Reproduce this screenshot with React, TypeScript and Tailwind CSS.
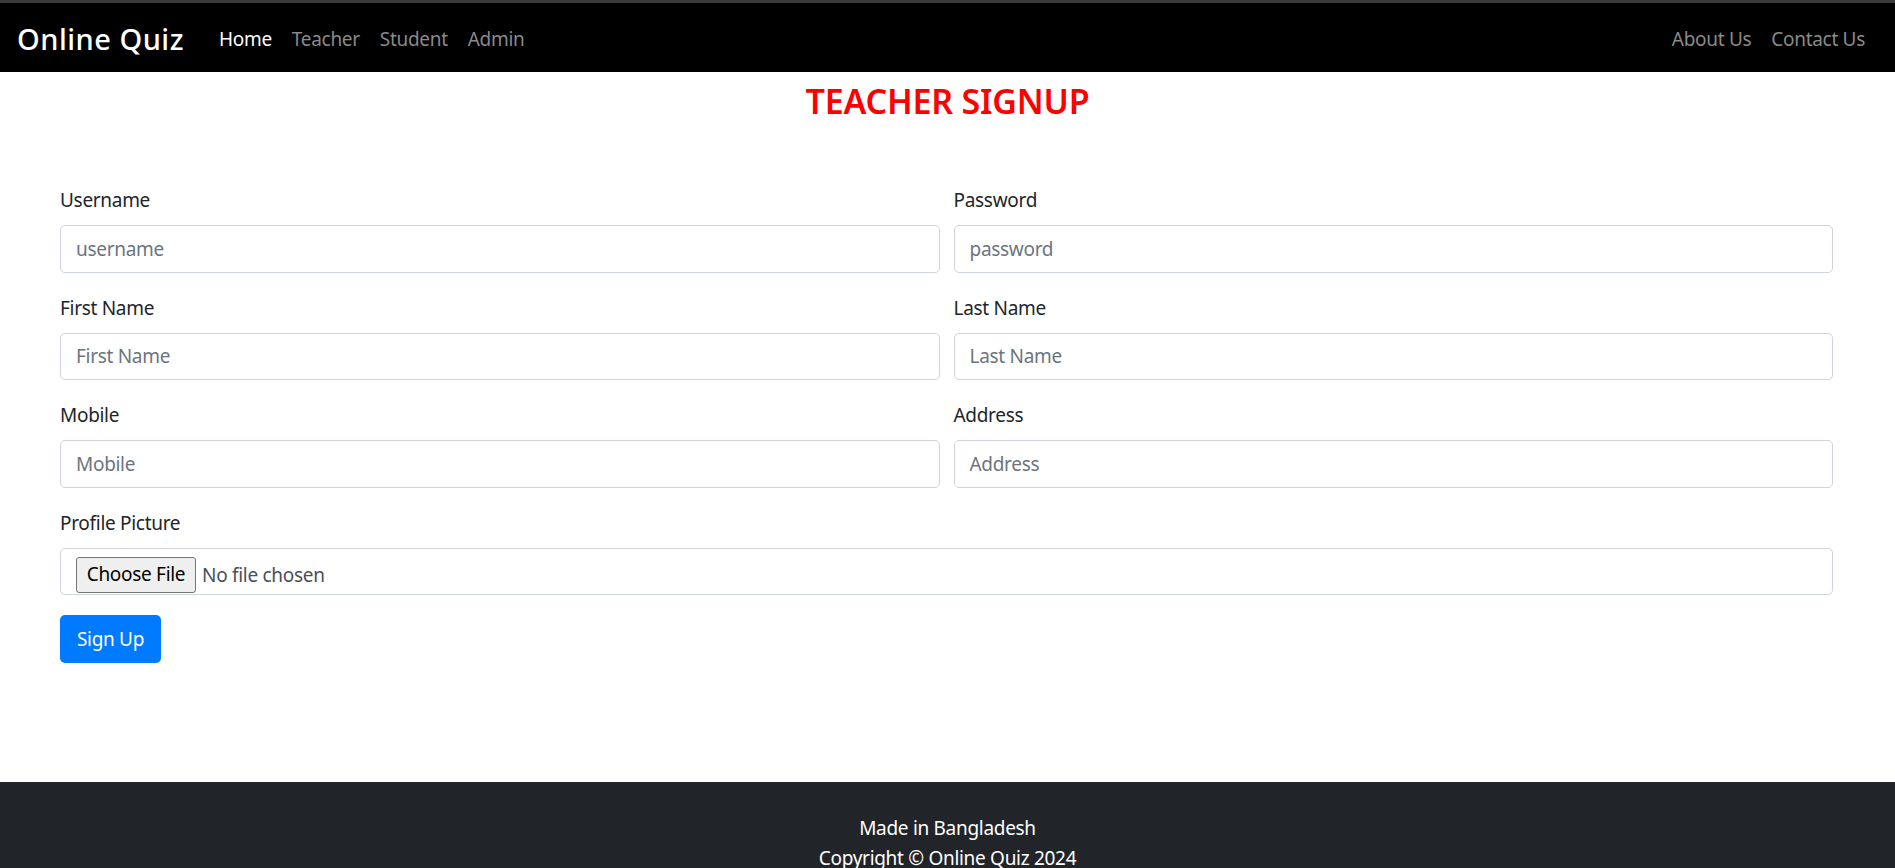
import React from "react";

const font = { fontFamily: '"Noto Sans", "Open Sans", sans-serif' };

function Field({ label, placeholder }: { label: string; placeholder: string }) {
  return (
    <div className="mb-[20px]">
      <label className="block leading-[30px] mb-[10px] text-[#212529]">{label}</label>
      <input
        placeholder={placeholder}
        className="block w-full h-[47.5px] border border-[#ced4da] rounded-[5px] px-[15px] text-[19px] tracking-[-0.3px] text-[#495057] placeholder:text-[#6c757d] outline-none bg-white"
      />
    </div>
  );
}

export default function App() {
  return (
    <div className="min-h-screen bg-white text-[19px] tracking-[-0.3px]" style={font}>
      <nav className="h-[72px] bg-black border-t-[3px] border-[#3a3a3a] flex items-center justify-between pl-[17px] pr-[20px] pt-[2px]">
        <div className="flex items-center">
          <div className="w-[192px] text-white text-[29px] leading-[40px] font-medium tracking-[0.5px]">Online Quiz</div>
          <div className="flex">
            <a className="px-[10px] text-white leading-[30px]">Home</a>
            <a className="px-[10px] text-[#8a8a8a] leading-[30px]">Teacher</a>
            <a className="px-[10px] text-[#8a8a8a] leading-[30px]">Student</a>
            <a className="px-[10px] text-[#8a8a8a] leading-[30px]">Admin</a>
          </div>
        </div>
        <div className="flex">
          <a className="px-[10px] text-[#8a8a8a] leading-[30px]">About Us</a>
          <a className="px-[10px] text-[#8a8a8a] leading-[30px]">Contact Us</a>
        </div>
      </nav>
      <main className="h-[710px] pt-[8px]">
        <h3 className="text-center text-[34px] leading-[42px] font-semibold text-[#ff0000] tracking-[-0.2px]">TEACHER SIGNUP</h3>
        <form className="mt-[63px] pl-[60px] pr-[62px]" onSubmit={(e) => e.preventDefault()}>
          <div className="grid grid-cols-2 gap-x-[14px]">
            <Field label="Username" placeholder="username" />
            <Field label="Password" placeholder="password" />
            <Field label="First Name" placeholder="First Name" />
            <Field label="Last Name" placeholder="Last Name" />
            <Field label="Mobile" placeholder="Mobile" />
            <Field label="Address" placeholder="Address" />
          </div>
          <div className="mb-[20px]">
            <label className="block leading-[30px] mb-[10px] text-[#212529]">Profile Picture</label>
            <div className="h-[47.5px] border border-[#ced4da] rounded-[5px] pl-[15px] pt-[8px] flex items-start">
              <span className="h-[36px] w-[120px] flex items-center justify-center bg-[#efefef] border border-[#767676] rounded-[3px] text-black">Choose File</span>
              <span className="ml-[6px] leading-[36px] text-[#495057]">No file chosen</span>
            </div>
          </div>
          <button className="h-[47.5px] w-[101px] bg-[#007bff] text-white rounded-[5px]">Sign Up</button>
        </form>
      </main>
      <footer className="bg-[#212529] text-white text-center pt-[31px] pb-[30px] leading-[30px]">
        <div>Made in Bangladesh</div>
        <div>Copyright © Online Quiz 2024</div>
      </footer>
    </div>
  );
}
